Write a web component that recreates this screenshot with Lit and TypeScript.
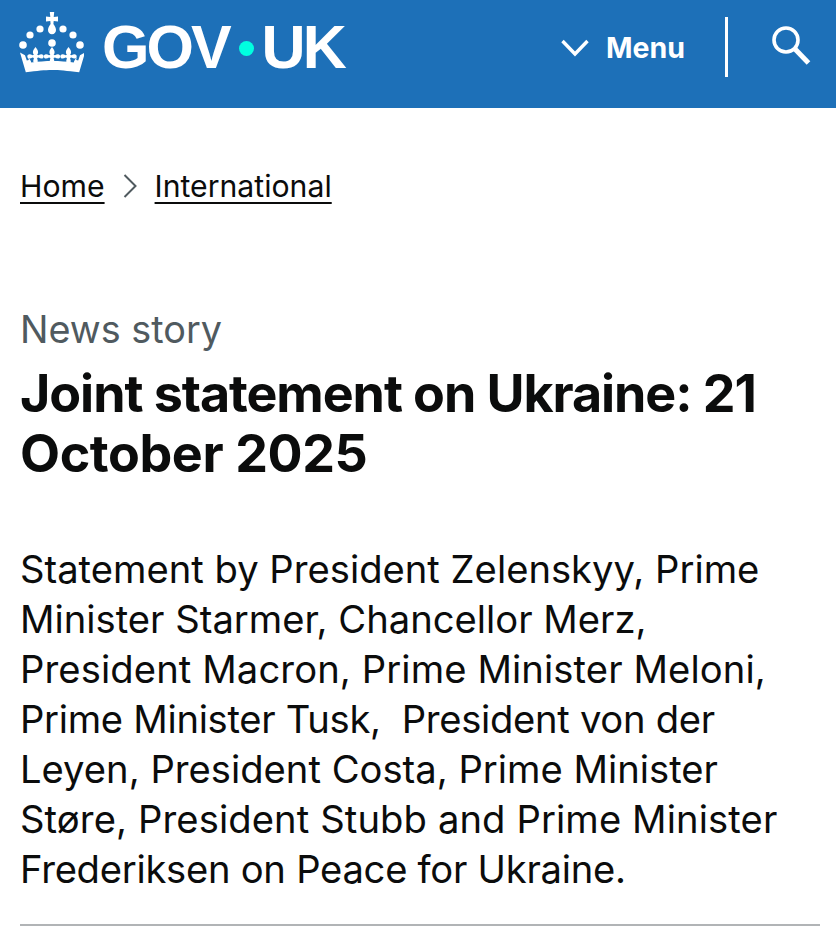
import { LitElement, html, css, svg } from "lit";
import { customElement } from "lit/decorators.js";

const fleur = (x: number) => svg`<path transform="translate(${x} 0)" d="M0 47c1.600 2 2.600 3.600 2.600 5.200 0 1-.4 1.800-1 2.600l1.400.5c1-.6 2-1 3-1 1.300 0 2.200 1 2.200 2.100s-.9 2.100-2.200 2.100c-1 0-2-.4-3-1l-1.400.5.8 3.500-2.400 1.500-2.400-1.500.8-3.500-1.400-.5c-1 .6-2 1-3 1-1.300 0-2.200-1-2.200-2.100s.9-2.100 2.200-2.100c1 0 2 .4 3 1l1.400-.5c-.6-.8-1-1.600-1-2.600 0-1.600 1-3.200 2.600-5.200z"/>`;

@customElement("app-root")
export class AppRoot extends LitElement {
  static styles = css`
    :host { display: block; font-family: Inter, "Noto Sans", sans-serif; color: #0b0c0c; background: #fff; }
    .bar { height: 108px; background: #1d70b8; color: #fff; display: flex; align-items: flex-start; box-sizing: border-box; padding-left: 19px; }
    .crown { width: 65px; height: 62px; margin-top: 11px; flex: none; fill: #fff; }
    .logo { margin: 11px 0 0 18px; font: 700 61px/72px "Liberation Sans", Arial, sans-serif; letter-spacing: -3px; display: flex; align-items: center; white-space: nowrap; }
    .dot { width: 15px; height: 15px; border-radius: 50%; background: #00ffe0; margin: 2px 8px 0 10px; flex: none; }
    .nav { margin-left: auto; display: flex; align-items: flex-start; }
    .menu { display: flex; align-items: center; height: 36px; margin-top: 29px; font-size: 28.5px; font-weight: 700; gap: 17px; }
    .chev { width: 28px; height: 18px; margin-top: 2px; fill: none; stroke: #fff; stroke-width: 3.4px; }
    .sep { width: 3px; height: 60px; background: #fff; margin: 17px 0 0 40px; }
    .search { width: 42px; height: 42px; margin: 25px 24px 0 42px; fill: none; stroke: #fff; }
    .crumbs { display: flex; align-items: center; margin: 60px 0 0 20px; height: 36px; font-size: 30.2px; line-height: 36px; }
    .crumbs a { color: #0b0c0c; text-decoration: underline; text-decoration-thickness: 2px; text-underline-offset: 5px; }
    .gt { width: 14px; height: 26px; margin: 0 18px; fill: none; stroke: #505a5f; stroke-width: 2px; }
    .cap { margin: 0 0 0 20px; padding-top: 103px; font-size: 37.8px; line-height: 44px; color: #505a5f; }
    h1 { margin: 13px 0 0 20px; font-size: 52px; line-height: 60px; font-weight: 700; letter-spacing: -1.08px; width: 790px; }
    .h2nd { letter-spacing: -0.4px; }
    .lead { margin: 60px 0 0 20px; font-size: 38.2px; line-height: 50px; width: 810px; white-space: pre; }
    .tight { letter-spacing: -0.3px; }
    .wider { letter-spacing: 0.1px; }
    .narrow { letter-spacing: -0.27px; }
    hr { margin: 30px 16px 0 20px; border: 0; height: 2px; background: #b1b4b6; }
  `;
  render() {
    return html`
      <header class="bar">
        <svg class="crown" viewBox="19 11 65 62" aria-hidden="true">
          <path d="M49.800 12h4.400l-.5 4.900 4.300-.5v5.200l-4.300-.5-.3 3c1.800 2.400 2.600 4.200 2.600 6 0 2.500-1.700 4.200-4 4.200s-4-1.700-4-4.200c0-1.800.8-3.600 2.600-6l-.3-3-4.300.5v-5.200l4.300.5z"/>
          <circle cx="30" cy="35" r="3.600"/><circle cx="40" cy="29" r="3.600"/>
          <circle cx="63" cy="29" r="3.600"/><circle cx="73" cy="35" r="3.600"/>
          <circle cx="23" cy="45" r="3.800"/><circle cx="80" cy="45" r="3.800"/>
          <circle cx="52" cy="43" r="3.800"/>
          ${fleur(35.500)}${fleur(52)}${fleur(68.500)}
          <path d="M20 52.500l5 2.700 1.800 5.300 2-.5-.5-3 2.500 4 .5 1.500c7-1 14-1.500 21.200-1.500s14.200.5 21.200 1.500l.5-1.500 2.500-4-.5 3 2 .5 1.800-5.300 5-2.700-5.800 19.700C66.500 70.800 59.500 70 52 70s-14.500.8-26.200 2.200z"/>
        </svg>
        <div class="logo"><span>GOV</span><span class="dot"></span><span>UK</span></div>
        <nav class="nav">
          <div class="menu">
            <svg class="chev" viewBox="0 0 28 18" aria-hidden="true"><path d="M1.500 2 14 15 26.500 2"/></svg>
            <span>Menu</span>
          </div>
          <div class="sep"></div>
          <svg class="search" viewBox="0 0 42 42" aria-hidden="true">
            <circle cx="16" cy="15" r="12" stroke-width="3.600"/>
            <path d="M25 24l13.500 14" stroke-width="5"/>
          </svg>
        </nav>
      </header>
      <nav class="crumbs">
        <a>Home</a>
        <svg class="gt" viewBox="0 0 14 26" aria-hidden="true"><path d="M1.500 2 12.500 13 1.500 24"/></svg>
        <a>International</a>
      </nav>
      <div class="cap">News story</div>
      <h1>Joint statement on Ukraine: 21<br /><span class="h2nd">October 2025</span></h1>
      <p class="lead">Statement by President Zelenskyy, Prime
Minister Starmer, Chancellor Merz,
<span class="wider">President Macron, Prime Minister Meloni,</span>
<span class="tight">Prime Minister Tusk,  President von der</span>
Leyen, President Costa, Prime Minister
<span class="wider">Støre, President Stubb and Prime Minister</span>
<span class="narrow">Frederiksen on Peace for Ukraine.</span></p>
      <hr />
    `;
  }
}
